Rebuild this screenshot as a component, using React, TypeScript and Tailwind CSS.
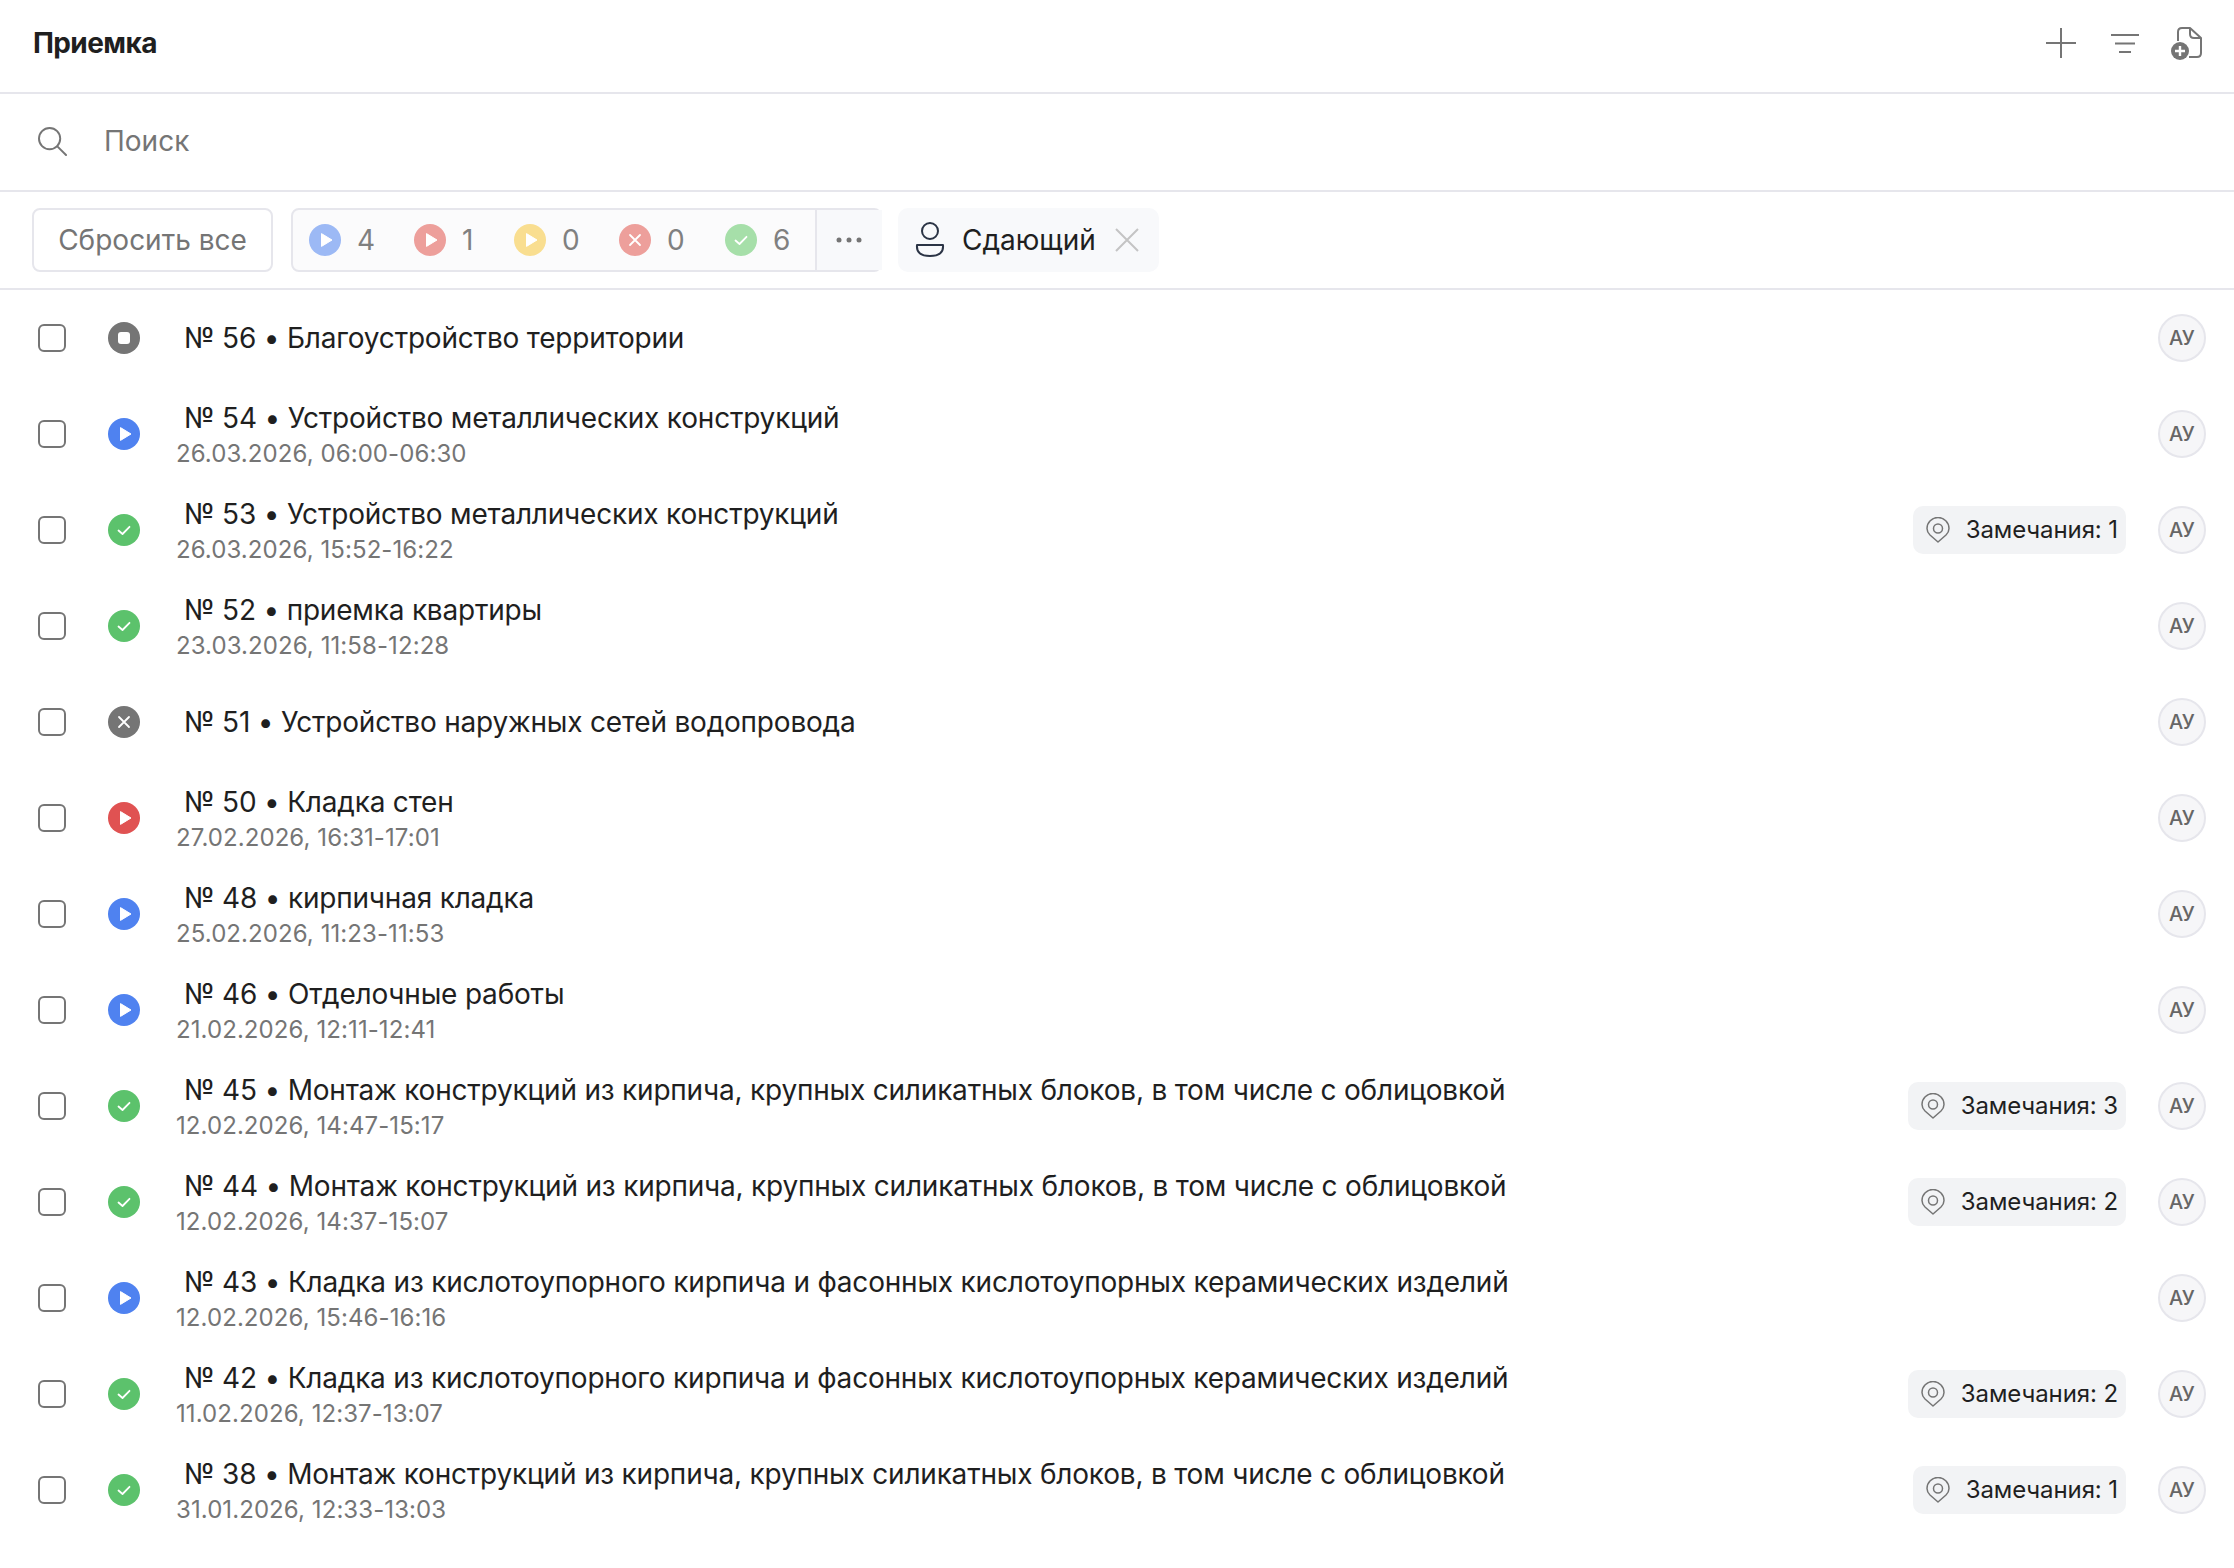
import { Fragment } from 'react'

type Status = 'stop' | 'blue' | 'green' | 'gray' | 'red'

const rows: { title: string; date?: string; notes?: number; status: Status }[] = [
  { title: '№ 56 • Благоустройство территории', status: 'stop' },
  { title: '№ 54 • Устройство металлических конструкций', date: '26.03.2026, 06:00-06:30', status: 'blue' },
  { title: '№ 53 • Устройство металлических конструкций', date: '26.03.2026, 15:52-16:22', notes: 1, status: 'green' },
  { title: '№ 52 • приемка квартиры', date: '23.03.2026, 11:58-12:28', status: 'green' },
  { title: '№ 51 • Устройство наружных сетей водопровода', status: 'gray' },
  { title: '№ 50 • Кладка стен', date: '27.02.2026, 16:31-17:01', status: 'red' },
  { title: '№ 48 • кирпичная кладка', date: '25.02.2026, 11:23-11:53', status: 'blue' },
  { title: '№ 46 • Отделочные работы', date: '21.02.2026, 12:11-12:41', status: 'blue' },
  { title: '№ 45 • Монтаж конструкций из кирпича, крупных силикатных блоков, в том числе с облицовкой', date: '12.02.2026, 14:47-15:17', notes: 3, status: 'green' },
  { title: '№ 44 • Монтаж конструкций из кирпича, крупных силикатных блоков, в том числе с облицовкой', date: '12.02.2026, 14:37-15:07', notes: 2, status: 'green' },
  { title: '№ 43 • Кладка из кислотоупорного кирпича и фасонных кислотоупорных керамических изделий', date: '12.02.2026, 15:46-16:16', status: 'blue' },
  { title: '№ 42 • Кладка из кислотоупорного кирпича и фасонных кислотоупорных керамических изделий', date: '11.02.2026, 12:37-13:07', notes: 2, status: 'green' },
  { title: '№ 38 • Монтаж конструкций из кирпича, крупных силикатных блоков, в том числе с облицовкой', date: '31.01.2026, 12:33-13:03', notes: 1, status: 'green' },
]

const Glyph = ({ kind }: { kind: 'play' | 'check' | 'x' | 'stop' }) => (
  <Fragment>
    {kind === 'play' && <path d="M12.5 9.6 L23 16 L12.5 22.4 Z" fill="#fff" stroke="#fff" strokeWidth="1" strokeLinejoin="round" />}
    {kind === 'check' && <path d="M10.5 16.5 L14.5 20 L21.5 12.8" fill="none" stroke="#fff" strokeWidth="1.8" strokeLinecap="round" strokeLinejoin="round" />}
    {kind === 'x' && <path d="M11 11 L21 21 M21 11 L11 21" fill="none" stroke="#fff" strokeWidth="1.8" strokeLinecap="round" />}
    {kind === 'stop' && <rect x="10" y="10" width="12" height="12" rx="3" fill="#fff" />}
  </Fragment>
)

const StatusIcon = ({ color, kind }: { color: string; kind: 'play' | 'check' | 'x' | 'stop' }) => (
  <svg width="32" height="32" viewBox="0 0 32 32" className="shrink-0">
    <circle cx="16" cy="16" r="16" fill={color} />
    <Glyph kind={kind} />
  </svg>
)

const statusMap: Record<Status, { color: string; kind: 'play' | 'check' | 'x' | 'stop' }> = {
  stop: { color: '#757575', kind: 'stop' },
  blue: { color: '#4f82f0', kind: 'play' },
  green: { color: '#5cc26c', kind: 'check' },
  gray: { color: '#757575', kind: 'x' },
  red: { color: '#e05252', kind: 'play' },
}

const counters = [
  { color: '#9cb9f5', kind: 'play' as const, n: 4, w: 'w-[105px]' },
  { color: '#ed9f9b', kind: 'play' as const, n: 1, w: 'w-[100px]' },
  { color: '#f9de90', kind: 'play' as const, n: 0, w: 'w-[105px]' },
  { color: '#ed9f9b', kind: 'x' as const, n: 0, w: 'w-[106px]' },
  { color: '#a6dfa9', kind: 'check' as const, n: 6, w: 'w-[90px]' },
]

export default function App() {
  return (
    <div className="min-h-[1568px] bg-white text-[#1f1f1f] font-['Inter',sans-serif]">
      <div className="h-[94px] flex items-center justify-between pl-[33px] pr-[31px] pb-[6px] border-b-2 border-[#e6e6ec]">
        <h1 className="text-[28px] font-bold tracking-[-0.6px]">Приемка</h1>
        <div className="flex items-center">
          <svg width="30" height="30" viewBox="0 0 30 30" fill="none" stroke="#757575" strokeWidth="2">
            <path d="M15 0 V30 M0 15 H30" />
          </svg>
          <svg width="28" height="23" viewBox="0 0 28 23" fill="none" stroke="#757575" strokeWidth="2" className="ml-[35px]">
            <path d="M0 3 H28 M4 11.5 H24 M8 20 H20" />
          </svg>
          <svg width="32" height="34" viewBox="0 0 32 34" fill="none" className="ml-[32px]">
            <path d="M7 15 V6 Q7 2 11 2 H19 L30 12 V27 Q30 31 26 31 H18" stroke="#757575" strokeWidth="2" strokeLinejoin="round" />
            <path d="M19 2 V8 Q19 12 23 12 H30" stroke="#757575" strokeWidth="2" />
            <circle cx="9" cy="25" r="9" fill="#757575" />
            <path d="M9 20 V30 M4 25 H14" stroke="#fff" strokeWidth="2.4" />
          </svg>
        </div>
      </div>

      <div className="h-[98px] flex items-center pl-[38px] pb-[2px] border-b-2 border-[#e6e6ec]">
        <svg width="29" height="29" viewBox="0 0 30 30" fill="none" stroke="#757575" strokeWidth="2" strokeLinecap="round">
          <circle cx="12" cy="12" r="11" />
          <path d="M20 20 L29 29" />
        </svg>
        <input readOnly placeholder="Поиск" className="ml-[37px] text-[28px] outline-none placeholder:text-[#757575]" />
      </div>

      <div className="h-[98px] flex items-center pl-[32px] border-b-2 border-[#e6e6ec]">
        <button className="h-[64px] w-[241px] rounded-[8px] border-2 border-[#e6e6ec] text-[28px] text-[#757575]">Сбросить все</button>
        <div className="ml-[18px] h-[64px] w-[591px] flex items-stretch rounded-[8px] border-2 border-[#e6e6ec] bg-[#fbfbfc]">
          <div className="flex items-center pl-[16px] grow">
            {counters.map((c, i) => (
              <div key={i} className={`flex items-center gap-[16px] ${c.w}`}>
                <StatusIcon color={c.color} kind={c.kind} />
                <span className="text-[28px] text-[#808080]">{c.n}</span>
              </div>
            ))}
          </div>
          <div className="w-[67px] shrink-0 flex items-center justify-center border-l-2 border-[#e6e6ec] bg-[#f8f9fb]">
            <svg width="26" height="6" viewBox="0 0 26 6" fill="#757575" className="-ml-[2px]">
              <circle cx="3" cy="3" r="2.5" />
              <circle cx="13" cy="3" r="2.5" />
              <circle cx="23" cy="3" r="2.5" />
            </svg>
          </div>
        </div>
        <div className="ml-[16px] h-[64px] w-[261px] flex items-center rounded-[10px] bg-[#f8f9fb] pl-[17px]">
          <svg width="30" height="36" viewBox="0 0 30 36" fill="none" stroke="#2b3445" strokeWidth="2">
            <circle cx="15" cy="9" r="8" />
            <path d="M2 23 H28 Q29 34 15 34 Q1 34 2 23 Z" strokeLinejoin="round" />
          </svg>
          <span className="ml-[17px] text-[28px]">Сдающий</span>
          <svg width="24" height="24" viewBox="0 0 24 24" stroke="#c4c4c4" strokeWidth="2" className="ml-[19px]">
            <path d="M1 1 L23 23 M23 1 L1 23" />
          </svg>
        </div>
      </div>

      <div>
        {rows.map(row => (
          <div key={row.title + row.date} className="h-[96px] flex items-center pl-[38px] pr-[28px]">
            <input type="checkbox" readOnly className="appearance-none w-[28px] h-[28px] shrink-0 rounded-[6px] border-2 border-[#757575]" />
            <div className="ml-[42px]">
              <StatusIcon {...statusMap[row.status]} />
            </div>
            <div className={`ml-[36px] grow min-w-0 ${row.date ? 'pt-[2px]' : ''}`}>
              <div className="ml-[8px] text-[28px] leading-[36px] tracking-[-0.2px]">{row.title}</div>
              {row.date && <div className="mt-[2px] text-[24px] leading-[32px] tracking-[0.08px] text-[#757575]">{row.date}</div>}
            </div>
            {row.notes !== undefined && (
              <div className="h-[48px] flex items-center rounded-[10px] bg-[#f2f3f5] pl-[13px] pr-[8px]">
                <svg width="24" height="26" viewBox="0 0 24 26" fill="none" stroke="#757575" strokeWidth="1.5">
                  <path d="M12 25 L4 18 Q1 15 1 11.5 A11 11 0 0 1 23 11.5 Q23 15 20 18 Z" strokeLinejoin="round" />
                  <circle cx="12" cy="11.5" r="4.5" />
                </svg>
                <span className="ml-[16px] text-[24px] tracking-[-0.1px] whitespace-nowrap">Замечания: {row.notes}</span>
              </div>
            )}
            <div className="ml-[32px] w-[48px] h-[48px] shrink-0 flex items-center justify-center rounded-full border-2 border-[#e6e6ec] bg-[#f6f6f8] text-[20px] font-medium text-[#666]">АУ</div>
          </div>
        ))}
      </div>
    </div>
  )
}
